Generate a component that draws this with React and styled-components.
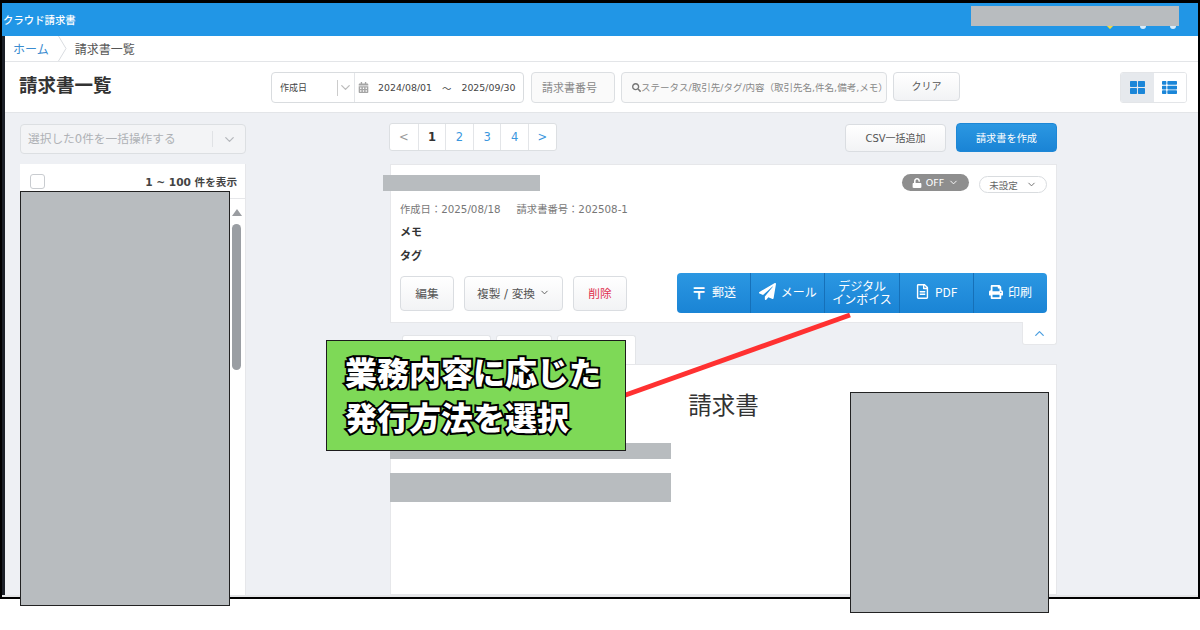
import React from 'react';
import styled, { createGlobalStyle } from 'styled-components';
import { ChevronDown, ChevronUp } from 'lucide-react';
import {
  FaCalendarAlt,
  FaSearch,
  FaThLarge,
  FaThList,
  FaPaperPlane,
  FaRegFileAlt,
  FaPrint,
  FaUnlock,
} from 'react-icons/fa';

const GlobalStyle = createGlobalStyle`
  html, body {
    margin: 0;
    padding: 0;
    background: #fff;
  }
  body {
    font-family: "DejaVu Sans", "Noto Sans CJK JP", sans-serif;
    color: #444;
  }
  * {
    box-sizing: border-box;
  }
`;

const Page = styled.div`
  position: relative;
  width: 1200px;
  height: 630px;
  overflow: hidden;
  background: #fff;
`;

const Screen = styled.div`
  width: 1200px;
  height: 599px;
  border: 2px solid #000;
  border-top-width: 3px;
  display: flex;
  flex-direction: column;
  overflow: hidden;
`;

const Header = styled.header`
  height: 33px;
  flex-shrink: 0;
  background: #2196e6;
  color: #fff;
  display: flex;
  align-items: center;
  padding-left: 1px;
  font-size: 10.4px;
  font-weight: 500;
`;

const HeaderIcons = styled.div`
  margin-left: auto;
  margin-right: 22px;
  height: 100%;
  display: flex;
  align-items: flex-end;
  gap: 24px;
  padding-bottom: 7px;
`;

const HeaderDot = styled.span`
  width: 6px;
  height: 6px;
  border-radius: 50%;
  background: #d8ecfa;
`;

const Shell = styled.div`
  flex: 1;
  min-height: 0;
  display: flex;
  border-bottom: 2px solid #e4e5e7;
`;

const Strip = styled.div`
  width: 3px;
  background: #1b1f27;
`;

const Content = styled.div`
  flex: 1;
  min-width: 0;
  display: flex;
  flex-direction: column;
`;

const Crumbs = styled.nav`
  height: 26px;
  flex-shrink: 0;
  display: flex;
  align-items: center;
  padding-left: 8px;
  background: #fff;
  border-bottom: 1px solid #e3e5e8;
  font-size: 12px;
  color: #555;
`;

const CrumbLink = styled.a`
  color: #3a8cd0;
`;

const CrumbArrow = styled.svg`
  width: 9px;
  height: 25px;
  margin: 0 8px 0 9px;
  color: #d9dce0;
`;

const Toolbar = styled.div`
  height: 51px;
  flex-shrink: 0;
  display: flex;
  align-items: flex-start;
  padding: 10px 0 0 15px;
  background: #fff;
  border-bottom: 1px solid #e3e5e8;
`;

const Title = styled.h1`
  width: 251px;
  margin: 0;
  padding-top: 1px;
  font-size: 18.5px;
  line-height: 26px;
  font-weight: 700;
  color: #333;
  text-indent: -1px;
`;

const DateGroup = styled.div`
  width: 253px;
  height: 31px;
  display: flex;
  align-items: center;
  border: 1px solid #d9dcdf;
  border-radius: 4px;
  font-size: 9.4px;
  color: #444;
`;

const DateKind = styled.div`
  width: 83px;
  height: 100%;
  display: flex;
  align-items: center;
  justify-content: space-between;
  padding-left: 8px;
  border-right: 1px solid #e3e5e8;
  font-size: 9px;

  svg {
    color: #bbb;
    margin-right: 1px;
  }
`;

const KindSep = styled.span`
  width: 1px;
  height: 16px;
  margin-left: auto;
  background: #ccc;
`;

const DateRange = styled.div`
  flex: 1;
  display: flex;
  align-items: center;
  padding-left: 3px;
  white-space: nowrap;

  svg {
    color: #a5a5a5;
    margin-right: 9px;
  }
`;

const Tilde = styled.span`
  margin: 0 10px;
`;

const FieldBox = styled.div`
  height: 31px;
  display: flex;
  align-items: center;
  flex-shrink: 0;
  margin-left: ${(p) => p.$gap}px;
  width: ${(p) => p.$width}px;
  padding: 0 0 1px 10px;
  background: #fafafa;
  border: 1px solid #dcdfe2;
  border-radius: 4px;
  color: #888;
  font-size: ${(p) => p.$size}px;
  white-space: nowrap;
  overflow: hidden;

  svg {
    color: #777;
    flex-shrink: 0;
  }
`;

const GhostButton = styled.button`
  height: ${(p) => p.$height}px;
  width: ${(p) => p.$width}px;
  flex-shrink: 0;
  display: inline-flex;
  align-items: center;
  justify-content: center;
  gap: 4px;
  padding: 0 0 2px;
  font-family: inherit;
  font-size: ${(p) => p.$size || 11.7}px;
  color: ${(p) => p.$color || '#555'};
  background: linear-gradient(#fff, #f2f3f5);
  border: 1px solid #dadde1;
  border-radius: 4px;
`;

const ClearButton = styled(GhostButton)`
  margin-left: 6px;
`;

const CsvButton = styled(GhostButton)`
  margin-top: 1px;
`;

const ViewToggle = styled.div`
  width: 67px;
  height: 31px;
  margin-left: auto;
  margin-right: 11px;
  display: flex;
  border: 1px solid #e3e5e8;
  border-radius: 3px;
  overflow: hidden;
`;

const ViewCell = styled.div`
  flex: 1;
  display: flex;
  align-items: center;
  justify-content: center;
  color: #1b86d8;
  background: ${(p) => (p.$on ? '#e6e9ed' : '#fff')};
`;

const Body = styled.div`
  flex: 1;
  min-height: 0;
  display: flex;
  gap: 144px;
  padding: 10px 0 0 15px;
  background: #eef0f4;
  overflow: hidden;
`;

const SideCol = styled.aside`
  width: 226px;
  flex-shrink: 0;
  display: flex;
  flex-direction: column;
  gap: 10px;
  padding-top: 1px;
`;

const BulkSelect = styled.div`
  height: 30px;
  flex-shrink: 0;
  display: flex;
  align-items: center;
  padding: 0 0 3px 7px;
  background: #f3f4f6;
  border: 1px solid #dcdfe2;
  border-radius: 4px;
  font-size: 11.7px;
  color: #aeb1b5;

  svg {
    color: #b5b8bc;
    margin: 3px 8px 0 9px;
  }
`;

const BulkSep = styled.span`
  width: 1px;
  height: 16px;
  margin: 3px 0 0 auto;
  background: #e0e2e5;
`;

const ListPanel = styled.section`
  flex: 1;
  min-height: 0;
  display: flex;
  flex-direction: column;
  background: #fff;
  border-right: 1px solid #e6e7ea;
`;

const ListHead = styled.div`
  height: 35px;
  flex-shrink: 0;
  display: flex;
  align-items: center;
  justify-content: space-between;
  padding: 0 8px 0 10px;
  border-bottom: 1px solid #e6e7ea;
  font-size: 10.6px;
  font-weight: 700;
  color: #444;
`;

const Check = styled.span`
  width: 15px;
  height: 15px;
  background: #fff;
  border: 1px solid #c9ccd0;
  border-radius: 3px;
`;

const ListBody = styled.div`
  flex: 1;
  display: flex;
  justify-content: flex-end;
`;

const ScrollTrack = styled.div`
  width: 15px;
  display: flex;
  flex-direction: column;
  align-items: center;
  padding-right: 2px;
`;

const ScrollArrow = styled.span`
  width: 0;
  height: 0;
  margin: 10px 0 8px;
  border-left: 5px solid transparent;
  border-right: 5px solid transparent;
  border-bottom: 7px solid #9a9da1;
`;

const ScrollThumb = styled.div`
  width: 9px;
  height: 146px;
  border-radius: 5px;
  background: #9a9ea3;
`;

const MainCol = styled.main`
  width: 667px;
  flex-shrink: 0;
  display: flex;
  flex-direction: column;
`;

const TopRow = styled.div`
  height: 29px;
  flex-shrink: 0;
  margin-bottom: 12px;
  display: flex;
  align-items: flex-start;
  justify-content: space-between;
`;

const Pager = styled.div`
  display: flex;
  height: 28px;
  margin-left: -1px;
  background: #fff;
  border: 1px solid #dcdfe2;
  border-radius: 3px;
`;

const PageCell = styled.span`
  width: 27.6px;
  display: flex;
  align-items: center;
  justify-content: center;
  font-size: 11.5px;
  font-weight: ${(p) => (p.$on ? 700 : 400)};
  color: ${(p) => (p.$on ? '#333' : p.$off ? '#999' : '#3a97de')};

  & + & {
    border-left: 1px solid #e3e5e8;
  }
`;

const TopActions = styled.div`
  display: flex;
  gap: 10px;
`;

const PrimaryButton = styled.button`
  width: 101px;
  height: 29px;
  padding: 0 0 1px;
  font-family: inherit;
  font-size: 10.2px;
  color: #fff;
  background: linear-gradient(#2b97e2, #1a84d5);
  border: 1px solid #1d87d6;
  border-radius: 4px;
`;

const Card = styled.section`
  position: relative;
  height: 159px;
  flex-shrink: 0;
  padding: 9px 9px 0;
  background: #fff;
  border: 1px solid #e6e7ea;
`;

const CardTop = styled.div`
  height: 25px;
  display: flex;
  align-items: flex-start;
  justify-content: flex-end;
  gap: 10px;
`;

const LockPill = styled.span`
  width: 67px;
  height: 17px;
  display: flex;
  align-items: center;
  justify-content: center;
  gap: 4px;
  border-radius: 9px;
  background: #8e8e8e;
  color: #fff;
  font-size: 9.5px;
`;

const StatusPill = styled.span`
  width: 68px;
  height: 17px;
  margin-top: 2px;
  display: flex;
  align-items: center;
  justify-content: center;
  gap: 8px;
  border: 1px solid #d9dcdf;
  border-radius: 9px;
  background: #fff;
  color: #666;
  font-size: 9.5px;
`;

const Meta = styled.div`
  height: 19px;
  display: flex;
  align-items: center;
  gap: 16px;
  font-size: 10.3px;
  color: #777;
`;

const FieldLabel = styled.div`
  height: 24px;
  display: flex;
  align-items: center;
  font-size: 11px;
  font-weight: 700;
  color: #333;
`;

const MemoLabel = styled(FieldLabel)`
  margin-top: 1px;
`;

const ActionRow = styled.div`
  display: flex;
  align-items: flex-start;
  margin-top: 6px;
`;

const LeftActions = styled.div`
  display: flex;
  gap: 10px;
  padding-top: 3px;
`;

const SendGroup = styled.div`
  width: 370px;
  height: 40px;
  margin-left: auto;
  display: flex;
  border-radius: 4px;
  overflow: hidden;
  background: linear-gradient(#2b97e2, #1a84d5);
  font-family: "Noto Sans CJK JP", sans-serif;
`;

const SendItem = styled.div`
  flex: 1 1 0;
  display: flex;
  align-items: center;
  justify-content: center;
  gap: 5px;
  padding-bottom: 3px;
  color: #fff;
  font-size: 12px;
  line-height: 13px;
  text-align: center;
  white-space: nowrap;

  & + & {
    border-left: 1px solid #1670b8;
  }
`;

const PostMark = styled.span`
  font-size: 16px;
  font-weight: 700;
  line-height: 1;
`;

const Collapse = styled.div`
  position: absolute;
  top: 100%;
  right: -1px;
  width: 35px;
  height: 23px;
  display: flex;
  align-items: center;
  justify-content: center;
  background: #fff;
  border: 1px solid #e6e7ea;
  border-top: 0;
  border-radius: 0 0 3px 3px;
  color: #4c9fe0;
`;

const TabRow = styled.div`
  height: 29px;
  margin-top: 12px;
  flex-shrink: 0;
  display: flex;
  gap: 5px;
  padding-left: 12px;
`;

const Tab = styled.div`
  width: ${(p) => p.$width}px;
  background: #fff;
  border: 1px solid #e3e5e8;
  border-bottom: 0;
  border-radius: 3px 3px 0 0;
`;

const Sheet = styled.div`
  flex: 1;
  padding-top: 26px;
  background: #fff;
  border: 1px solid #e6e7ea;
  text-align: center;
`;

const DocTitle = styled.div`
  font-size: 23.5px;
  line-height: 30px;
  color: #333;
`;

const Redact = styled.div`
  position: absolute;
  left: ${(p) => p.$x}px;
  top: ${(p) => p.$y}px;
  width: ${(p) => p.$w}px;
  height: ${(p) => p.$h}px;
  background: #b8bcbf;
  border: ${(p) => (p.$framed ? '1px solid #222' : '0')};
`;

const Leader = styled.svg`
  position: absolute;
  left: 0;
  top: 0;
  pointer-events: none;
`;

const Callout = styled.div`
  position: absolute;
  left: 326px;
  top: 340px;
  width: 300px;
  height: 111px;
  padding: 8px 0 0 18px;
  background: #7ed957;
  border: 1px solid #1c1c1c;
  color: #fff;
  font-family: "Noto Sans CJK JP", sans-serif;
  font-size: 32px;
  line-height: 45px;
  font-weight: 900;
  white-space: nowrap;
  -webkit-text-stroke: 4px #000;
  paint-order: stroke fill;
`;

const sendItems = [
  { key: 'post', icon: <PostMark>〒</PostMark>, label: '郵送' },
  { key: 'mail', icon: <FaPaperPlane size={17} />, label: 'メール' },
  { key: 'invoice', label: <>デジタル<br />インボイス</> },
  { key: 'pdf', icon: <FaRegFileAlt size={15} />, label: 'PDF' },
  { key: 'print', icon: <FaPrint size={14} />, label: '印刷' },
];

export default function App() {
  return (
    <Page>
      <GlobalStyle />
      <Screen>
        <Header>
          クラウド請求書
          <HeaderIcons>
            <svg width="12" height="12" viewBox="0 0 12 12">
              <path d="M6 12 0 6h12z" fill="#8cc63f" />
              <path d="M6 12 3 9h6z" fill="#f2d648" />
            </svg>
            <HeaderDot />
            <HeaderDot />
          </HeaderIcons>
        </Header>
        <Shell>
          <Strip />
          <Content>
            <Crumbs>
              <CrumbLink>ホーム</CrumbLink>
              <CrumbArrow viewBox="0 0 9 25">
                <path d="M0.5 0 8 12.5 0.5 25" fill="none" stroke="currentColor" />
              </CrumbArrow>
              <span>請求書一覧</span>
            </Crumbs>
            <Toolbar>
              <Title>請求書一覧</Title>
              <DateGroup>
                <DateKind>
                  作成日
                  <KindSep />
                  <ChevronDown size={15} />
                </DateKind>
                <DateRange>
                  <FaCalendarAlt size={11} />
                  2024/08/01
                  <Tilde>～</Tilde>
                  2025/09/30
                </DateRange>
              </DateGroup>
              <FieldBox $gap={7} $width={84} $size={11}>請求書番号</FieldBox>
              <FieldBox $gap={6} $width={266} $size={9.5}>
                <FaSearch size={9} />
                ステータス/取引先/タグ/内容（取引先名,件名,備考,メモ）
              </FieldBox>
              <ClearButton $width={67} $height={29} $size={10}>クリア</ClearButton>
              <ViewToggle>
                <ViewCell $on><FaThLarge size={15} /></ViewCell>
                <ViewCell><FaThList size={15} /></ViewCell>
              </ViewToggle>
            </Toolbar>
            <Body>
              <SideCol>
                <BulkSelect>
                  選択した0件を一括操作する
                  <BulkSep />
                  <ChevronDown size={15} />
                </BulkSelect>
                <ListPanel>
                  <ListHead>
                    <Check />
                    1 ~ 100 件を表示
                  </ListHead>
                  <ListBody>
                    <ScrollTrack>
                      <ScrollArrow />
                      <ScrollThumb />
                    </ScrollTrack>
                  </ListBody>
                </ListPanel>
              </SideCol>
              <MainCol>
                <TopRow>
                  <Pager>
                    <PageCell $off>&lt;</PageCell>
                    <PageCell $on>1</PageCell>
                    <PageCell>2</PageCell>
                    <PageCell>3</PageCell>
                    <PageCell>4</PageCell>
                    <PageCell>&gt;</PageCell>
                  </Pager>
                  <TopActions>
                    <CsvButton $width={101} $height={28} $size={10}>CSV一括追加</CsvButton>
                    <PrimaryButton>請求書を作成</PrimaryButton>
                  </TopActions>
                </TopRow>
                <Card>
                  <CardTop>
                    <LockPill>
                      <FaUnlock size={10} />
                      OFF
                      <ChevronDown size={11} />
                    </LockPill>
                    <StatusPill>
                      未設定
                      <ChevronDown size={11} />
                    </StatusPill>
                  </CardTop>
                  <Meta>
                    <span>作成日：2025/08/18</span>
                    <span>請求書番号：202508-1</span>
                  </Meta>
                  <MemoLabel>メモ</MemoLabel>
                  <FieldLabel>タグ</FieldLabel>
                  <ActionRow>
                    <LeftActions>
                      <GhostButton $width={54} $height={35}>編集</GhostButton>
                      <GhostButton $width={99} $height={35}>
                        複製 / 変換
                        <ChevronDown size={11} />
                      </GhostButton>
                      <GhostButton $width={54} $height={35} $color="#e0304f">削除</GhostButton>
                    </LeftActions>
                    <SendGroup>
                      {sendItems.map((item) => (
                        <SendItem key={item.key}>
                          {item.icon}
                          <span>{item.label}</span>
                        </SendItem>
                      ))}
                    </SendGroup>
                  </ActionRow>
                  <Collapse><ChevronUp size={15} /></Collapse>
                </Card>
                <TabRow>
                  <Tab $width={89} />
                  <Tab $width={56} />
                  <Tab $width={79} />
                </TabRow>
                <Sheet>
                  <DocTitle>請求書</DocTitle>
                </Sheet>
              </MainCol>
            </Body>
          </Content>
        </Shell>
      </Screen>

      <Redact $x={971} $y={6} $w={208} $h={20} />
      <Redact $x={383} $y={175} $w={157} $h={16} />
      <Redact $x={390} $y={443} $w={281} $h={16} />
      <Redact $x={390} $y={473} $w={281} $h={29} />
      <Redact $x={20} $y={191} $w={210} $h={415} $framed />
      <Redact $x={850} $y={392} $w={199} $h={221} $framed />

      <Leader width="1200" height="630">
        <line x1="850" y1="315" x2="620" y2="397" stroke="#ff3131" strokeWidth="5" />
      </Leader>
      <Callout>
        業務内容に応じた
        <br />
        発行方法を選択
      </Callout>
    </Page>
  );
}
